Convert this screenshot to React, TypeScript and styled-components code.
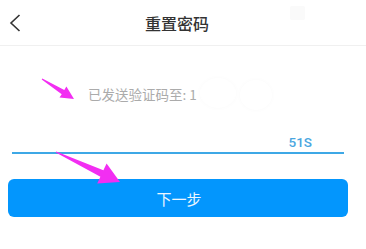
import styled, { createGlobalStyle } from 'styled-components';

const GlobalStyle = createGlobalStyle`
  html, body {
    margin: 0;
    padding: 0;
    background: #ffffff;
  }
  body {
    font-family: 'Noto Sans CJK SC', 'Noto Sans', sans-serif;
    width: 366px;
    height: 249px;
    overflow: hidden;
  }
`;

const Page = styled.div`
  position: relative;
  width: 366px;
  height: 249px;
  background: #fff;
`;

const Header = styled.div`
  display: grid;
  grid-template-columns: 40px 1fr 52px;
  align-items: center;
  height: 45px;
  border-bottom: 1px solid #f0f0f0;
`;

const BackButton = styled.div`
  display: flex;
  align-items: center;
  justify-content: flex-start;
  padding-left: 9px;
  height: 100%;
`;

const Title = styled.div`
  text-align: center;
  font-size: 16px;
  font-weight: 500;
  color: #333;
`;

const Ghost = styled.div`
  display: flex;
  align-items: flex-start;
  height: 100%;
  padding-top: 6px;
  margin-left: -24px;
  box-sizing: border-box;
`;

const GhostSquare = styled.span`
  width: 15px;
  height: 14px;
  background: #fafafa;
  border-radius: 2px;
`;

const Body = styled.div`
  display: flex;
  flex-direction: column;
`;

const SentRow = styled.div`
  position: relative;
  padding: 38px 0 0 88px;
  height: 20px;
  display: flex;
  align-items: center;
  font-size: 13.5px;
  color: #ababab;
`;

const Blur = styled.span`
  position: absolute;
  background: #fff;
  border-radius: 50%;
  box-shadow: 0 0 5px rgba(0, 0, 0, 0.025);
`;

const InputRow = styled.div`
  margin: 28px 22px 0 12px;
  height: 20px;
  display: flex;
  align-items: center;
  justify-content: flex-end;
  padding-right: 32px;
  border-bottom: 2px solid #3ea8e6;
`;

const Countdown = styled.span`
  font-family: Roboto, 'Noto Sans', sans-serif;
  font-size: 13.5px;
  font-weight: 500;
  color: #4aa6e0;
`;

const NextButton = styled.button`
  margin: 25px 18px 0 8px;
  height: 38px;
  border: none;
  border-radius: 6px;
  background: #0396fd;
  color: #eef6ff;
  font-family: 'Noto Sans CJK SC', sans-serif;
  font-size: 15px;
  display: flex;
  align-items: center;
  justify-content: center;
  padding: 0 0 0 2px;
`;

const Overlay = styled.svg`
  position: absolute;
  left: 0;
  top: 0;
  pointer-events: none;
`;

function arrowPoints(
  x1: number, y1: number, x2: number, y2: number,
  headLen: number, headW: number, shaftW: number
) {
  const dx = x2 - x1;
  const dy = y2 - y1;
  const len = Math.hypot(dx, dy);
  const ux = dx / len;
  const uy = dy / len;
  const px = -uy;
  const py = ux;
  const bx = x2 - ux * headLen;
  const by = y2 - uy * headLen;
  const pts = [
    [x1 + px * 0.5, y1 + py * 0.5],
    [bx + px * shaftW / 2, by + py * shaftW / 2],
    [bx + px * headW / 2, by + py * headW / 2],
    [x2, y2],
    [bx - px * headW / 2, by - py * headW / 2],
    [bx - px * shaftW / 2, by - py * shaftW / 2],
    [x1 - px * 0.5, y1 - py * 0.5],
  ];
  return pts.map(p => p.map(v => v.toFixed(1)).join(',')).join(' ');
}

const App = () => {
  return (
    <>
      <GlobalStyle />
      <Page>
        <Header>
          <BackButton>
            <svg width="12" height="18" viewBox="0 0 12 18">
              <path d="M10.5 1 L2 9 L10.5 17" fill="none" stroke="#333" strokeWidth="1.6" />
            </svg>
          </BackButton>
          <Title>重置密码</Title>
          <Ghost>
            <GhostSquare />
          </Ghost>
        </Header>
        <Body>
          <SentRow>
            已发送验证码至: 1
            <Blur style={{ left: 200, top: 32, width: 36, height: 30 }} />
            <Blur style={{ left: 240, top: 34, width: 32, height: 30 }} />
          </SentRow>
          <InputRow>
            <Countdown>51S</Countdown>
          </InputRow>
          <NextButton>下一步</NextButton>
        </Body>
        <Overlay width="366" height="249" viewBox="0 0 366 249">
          <polygon points={arrowPoints(42, 79, 74, 99, 13, 13, 5)} fill="#f22ef2" />
          <polygon points={arrowPoints(56, 152, 120, 182, 20, 22, 7)} fill="#f22ef2" />
        </Overlay>
      </Page>
    </>
  );
};

export default App;
